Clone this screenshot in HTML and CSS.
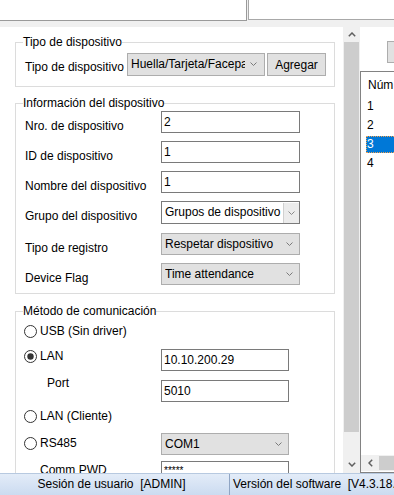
FILE: index.html
```html
<!DOCTYPE html>
<html lang="es">
<head>
  <meta charset="UTF-8">
  <title>Dispositivo</title>
  <link rel="stylesheet" href="styles.css">
</head>
<body>
  <div class="top">
    <div class="left-box"></div>
    <div class="right-box"></div>
  </div>

  <div class="main">
    <div class="form-panel">
      <fieldset class="group g-type">
        <legend>Tipo de dispositivo</legend>
        <div class="type-row">
          <span class="type-label">Tipo de dispositivo</span>
          <div class="combo gray type-combo">
            <span class="combo-text">Huella/Tarjeta/Facepass</span>
            <svg class="chev" width="7" height="4" viewBox="0 0 7 4"><path d="M0.5 0.5 L3.5 3.5 L6.5 0.5" fill="none" stroke="#7a7a7a"/></svg>
          </div>
          <button class="btn">Agregar</button>
        </div>
      </fieldset>

      <fieldset class="group g-info">
        <legend>Información del dispositivo</legend>
        <div class="row">
          <span class="lbl">Nro. de dispositivo</span>
          <div class="field">2</div>
        </div>
        <div class="row">
          <span class="lbl">ID de dispositivo</span>
          <div class="field">1</div>
        </div>
        <div class="row">
          <span class="lbl">Nombre del dispositivo</span>
          <div class="field">1</div>
        </div>
        <div class="row tall">
          <span class="lbl">Grupo del dispositivo</span>
          <div class="combo white">
            <span class="combo-text">Grupos de dispositivo</span>
            <span class="drop"><svg width="7" height="4" viewBox="0 0 7 4"><path d="M0.5 0.5 L3.5 3.5 L6.5 0.5" fill="none" stroke="#8a8a8a"/></svg></span>
          </div>
        </div>
        <div class="row">
          <span class="lbl">Tipo de registro</span>
          <div class="combo gray">
            <span class="combo-text">Respetar dispositivo</span>
            <svg class="chev" width="7" height="4" viewBox="0 0 7 4"><path d="M0.5 0.5 L3.5 3.5 L6.5 0.5" fill="none" stroke="#7a7a7a"/></svg>
          </div>
        </div>
        <div class="row last">
          <span class="lbl">Device Flag</span>
          <div class="combo gray">
            <span class="combo-text">Time attendance</span>
            <svg class="chev" width="7" height="4" viewBox="0 0 7 4"><path d="M0.5 0.5 L3.5 3.5 L6.5 0.5" fill="none" stroke="#7a7a7a"/></svg>
          </div>
        </div>
      </fieldset>

      <fieldset class="group g-comm">
        <legend>Método de comunicación</legend>
        <div class="crow r-usb">
          <span class="radio"><svg width="13" height="13" viewBox="0 0 13 13"><circle cx="6.5" cy="6.5" r="6" fill="#fff" stroke="#333"/></svg>USB (Sin driver)</span>
        </div>
        <div class="crow r-lan">
          <span class="radio"><svg width="13" height="13" viewBox="0 0 13 13"><circle cx="6.5" cy="6.5" r="6" fill="#fff" stroke="#333"/><circle cx="6.5" cy="6.5" r="3.2" fill="#333"/></svg>LAN</span>
          <div class="field short">10.10.200.29</div>
        </div>
        <div class="crow r-port">
          <span class="sub port">Port</span>
          <div class="field short">5010</div>
        </div>
        <div class="crow r-lanc">
          <span class="radio"><svg width="13" height="13" viewBox="0 0 13 13"><circle cx="6.5" cy="6.5" r="6" fill="#fff" stroke="#333"/></svg>LAN (Cliente)</span>
        </div>
        <div class="crow r-rs">
          <span class="radio"><svg width="13" height="13" viewBox="0 0 13 13"><circle cx="6.5" cy="6.5" r="6" fill="#fff" stroke="#333"/></svg>RS485</span>
          <div class="combo gray short">
            <span class="combo-text">COM1</span>
            <svg class="chev" width="7" height="4" viewBox="0 0 7 4"><path d="M0.5 0.5 L3.5 3.5 L6.5 0.5" fill="none" stroke="#7a7a7a"/></svg>
          </div>
        </div>
        <div class="crow r-pwd">
          <span class="sub pwd">Comm PWD</span>
          <div class="field short stars">*****</div>
        </div>
      </fieldset>
    </div>

    <div class="vscroll">
      <div class="arrow up"><svg width="8" height="5" viewBox="0 0 8 5"><path d="M0.8 4.2 L4 1 L7.2 4.2" fill="none" stroke="#606060" stroke-width="1.5"/></svg></div>
      <div class="thumb"></div>
      <div class="track"></div>
      <div class="arrow down"><svg width="8" height="5" viewBox="0 0 8 5"><path d="M0.8 0.8 L4 4 L7.2 0.8" fill="none" stroke="#606060" stroke-width="1.5"/></svg></div>
    </div>

    <div class="list-panel">
      <button class="btn side-btn"></button>
      <div class="listbox">
        <div class="list-head">Núm</div>
        <div class="item">1</div>
        <div class="item">2</div>
        <div class="item selected">3</div>
        <div class="item">4</div>
        <div class="list-fill"></div>
        <div class="hscroll">
          <div class="arrow left"><svg width="5" height="8" viewBox="0 0 5 8"><path d="M4.2 0.8 L1 4 L4.2 7.2" fill="none" stroke="#606060" stroke-width="1.5"/></svg></div>
          <div class="hthumb"></div>
        </div>
      </div>
    </div>
  </div>

  <div class="status">
    <div class="status-user">Sesión de usuario&nbsp; [ADMIN]</div>
    <div class="status-ver">Versión del software&nbsp; [V4.3.18.0]</div>
  </div>
</body>
</html>
```

FILE: styles.css
```css
* { box-sizing: border-box; }

body {
  margin: 0;
  width: 394px;
  height: 495px;
  overflow: hidden;
  font-family: "Liberation Sans", Arial, sans-serif;
  font-size: 12px;
  line-height: 16px;
  color: #000;
  background: #fff;
}

/* top strip */
.top {
  display: flex;
  align-items: flex-start;
  height: 27px;
  background: #f0f0f0;
}

.left-box {
  width: 247px;
  height: 21px;
  background: #fff;
  border-right: 1px solid #9a9a9a;
  border-bottom: 1px solid #9a9a9a;
}

.right-box {
  flex: 1;
  height: 20px;
  margin-left: 1px;
  background: #fff;
  border-left: 1px solid #a8a8a8;
  border-bottom: 1px solid #a8a8a8;
}

.main {
  display: flex;
  height: 446px;
}

/* left form */
.form-panel {
  width: 343px;
  padding: 7px 0 0 15px;
  background: #fff;
  overflow: hidden;
}

.group {
  width: 320px;
  min-width: 0;
  margin: 0;
  border: 1px solid #dcdcdc;
  padding: 0 8px 8px 9px;
}

.group legend {
  padding: 0;
  margin-left: -2px;
  line-height: 16px;
}

.g-type { padding-top: 3px; padding-bottom: 10px; }
.g-info { margin-top: 8px; padding-bottom: 8px; }
.g-comm { margin-top: 9px; padding-left: 8px; padding-bottom: 40px; }
.g-comm legend { margin-left: -1px; }

.type-row {
  display: flex;
  height: 23px;
}

.type-label {
  width: 102px;
  padding-top: 6px;
  white-space: nowrap;
}

.row {
  display: flex;
  height: 22px;
  margin-bottom: 8px;
}

.row.tall { height: 23px; margin-bottom: 9px; }
.row.last { margin-bottom: 0; }

.lbl {
  width: 136px;
  padding-top: 7px;
  white-space: nowrap;
}

.field {
  width: 139px;
  height: 22px;
  border: 1px solid #7a7a7a;
  background: #fff;
  padding: 2px 2px 0;
  white-space: nowrap;
  overflow: hidden;
}

.field.short,
.combo.short { width: 128px; }

.stars { font-size: 10px; line-height: 12px; padding-top: 3px; }

.combo {
  display: flex;
  align-items: center;
  width: 139px;
  height: 22px;
  padding: 0 6px 1px 3px;
  white-space: nowrap;
}

.combo.gray {
  background: #e1e1e1;
  border: 1px solid #adadad;
}

.combo.white {
  height: 23px;
  background: #fff;
  border: 1px solid #7a7a7a;
  padding-right: 0;
}

.combo-text {
  flex: 1;
  overflow: hidden;
}

.chev { flex: none; margin-left: 4px; }

.drop {
  flex: none;
  display: flex;
  align-items: center;
  justify-content: center;
  width: 16px;
  height: 100%;
  margin-top: 1px;
  background: #ececec;
  border-left: 1px solid #d0d0d0;
}

.type-combo {
  width: 138px;
  height: 23px;
  padding-right: 8px;
}

.type-combo .combo-text { flex: none; width: 114px; }
.type-combo .chev { margin-left: 5px; }

.btn {
  font: inherit;
  color: #000;
  background: #e1e1e1;
  border: 1px solid #adadad;
  border-radius: 0;
  padding: 0;
}

.type-row .btn {
  width: 59px;
  height: 23px;
  margin-left: 2px;
}

/* communication rows */
.crow {
  display: grid;
  grid-template-columns: 137px 128px;
  align-items: start;
}

.radio {
  display: flex;
  align-items: center;
  height: 16px;
  white-space: nowrap;
}

.radio svg { margin-right: 3px; }

.r-usb { height: 29px; }
.r-usb .radio { margin-top: 4px; }
.r-lan { height: 27px; }
.r-lan .field { margin-top: 1px; }
.r-port { height: 33px; }
.r-port .field { margin-top: 5px; }
.r-lanc { height: 25px; }
.r-rs { height: 28px; }
.r-rs .radio { margin-top: 2px; }
.r-pwd .sub { margin-top: 1px; }

.port { margin-left: 23px; }
.pwd { margin-left: 16px; }

/* vertical scrollbar */
.vscroll {
  display: flex;
  flex-direction: column;
  width: 17px;
  background: #f0f0f0;
}

.arrow {
  display: flex;
  align-items: center;
  justify-content: center;
}

.vscroll .up { height: 15px; }
.vscroll .down { height: 17px; }

.thumb {
  height: 390px;
  margin: 0 1px;
  background: #cdcdcd;
}

.track { flex: 1; }

/* right list */
.list-panel {
  flex: 1;
  display: flex;
  flex-direction: column;
  padding-top: 14px;
  overflow: hidden;
  background: #fff;
}

.side-btn {
  flex: none;
  width: 60px;
  height: 22px;
  margin-left: 27px;
}

.listbox {
  flex: 1;
  display: flex;
  flex-direction: column;
  margin-top: 8px;
  padding-top: 5px;
  border: 1px solid #828282;
  border-right: none;
  width: 60px;
}

.list-head {
  height: 21px;
  padding-left: 7px;
}

.item {
  height: 17px;
  line-height: 17px;
  margin: 0 0 2px 5px;
  padding-left: 1px;
}

.item.selected {
  background: #0078d7;
  color: #fff;
  border: 1px dotted #f3a04c;
  border-right: none;
  line-height: 15px;
  padding-left: 0;
}

.list-fill { flex: 1; }

.hscroll {
  display: flex;
  height: 16px;
  margin-bottom: 1px;
  background: #f0f0f0;
}

.hscroll .left { width: 18px; }

.hthumb {
  flex: 1;
  margin: 1px 0;
  background: #cdcdcd;
}

/* status bar */
.status {
  display: flex;
  height: 22px;
  padding-top: 2px;
  border-top: 1px solid #b7c9e0;
  background: linear-gradient(#e3ecf8, #cbdbf0);
  white-space: nowrap;
}

.status-user {
  width: 229px;
  text-align: center;
  padding-right: 6px;
}

.status-ver {
  flex: 1;
  margin-top: -2px;
  padding: 2px 0 0 3px;
  border-left: 1px solid #8fa5c4;
  overflow: hidden;
}
```
